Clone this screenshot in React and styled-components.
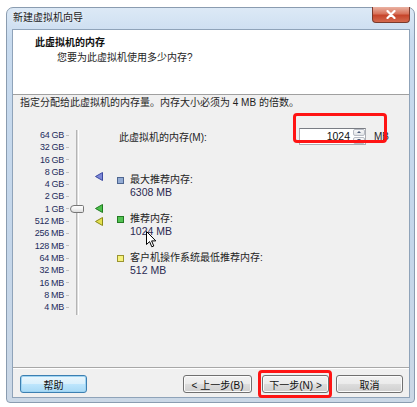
import React from 'react';
import styled, { createGlobalStyle } from 'styled-components';

const GlobalStyle = createGlobalStyle`
  html, body {
    margin: 0;
    padding: 0;
    background: #ffffff;
  }
  body {
    font-family: "Liberation Sans", "Noto Sans CJK SC", sans-serif;
    font-size: 10px;
    color: #1a1a1a;
  }
`;

const Page = styled.div`
  padding: 7px 0 0 6px;
`;

const Window = styled.div`
  position: relative;
  box-sizing: border-box;
  width: 409px;
  height: 396px;
  border: 1px solid #8a9cb0;
  border-radius: 7px 7px 4px 4px;
  background: linear-gradient(180deg, #dce9f6 0%, #c8dbef 8%, #c4d6ea 60%, #cbd8e6 100%);
  display: flex;
  flex-direction: column;
`;

const TitleBar = styled.div`
  height: 21px;
  display: flex;
  align-items: flex-start;
  padding-left: 6px;
`;

const TitleText = styled.div`
  line-height: 19px;
  font-size: 10px;
  color: #1a1a1a;
  text-shadow: 0 0 4px #ffffff;
  flex: 1;
`;

const CloseButton = styled.div`
  width: 38px;
  height: 16px;
  margin: -1px 4px 0 0;
  box-sizing: border-box;
  border: 1px solid #7a3a2c;
  border-top: none;
  border-radius: 0 0 4px 4px;
  background: linear-gradient(180deg, #eab2a2 0%, #d8735b 45%, #c6452b 55%, #d46a4e 100%);
  display: flex;
  align-items: center;
  justify-content: center;
`;

const Client = styled.div`
  flex: 1;
  margin: 0 4px 4px 5px;
  border: 1px solid #8fa3b9;
  background: #f0f0f0;
  display: flex;
  flex-direction: column;
`;

const Header = styled.div`
  height: 58px;
  background: #ffffff;
  border-bottom: 1px solid #a0a0a0;
  padding: 6px 0 0 22px;
  box-sizing: content-box;
`;

const HeaderTitle = styled.div`
  font-weight: bold;
  line-height: 14px;
  color: #111;
`;

const HeaderSub = styled.div`
  line-height: 14px;
  margin: 1px 0 0 22px;
  color: #1e1e1e;
`;

const Body = styled.div`
  flex: 1;
  padding: 1px 0 0 7px;
`;

const Instruction = styled.div`
  line-height: 14px;
  color: #1e1e1e;
`;

const MainRow = styled.div`
  display: flex;
  margin-top: 17px;
`;

const ScaleLabels = styled.div`
  width: 44px;
  padding-top: 2px;
  display: flex;
  flex-direction: column;
  align-items: flex-end;
`;

const ScaleLabel = styled.div`
  height: 12.3px;
  line-height: 12.3px;
  font-size: 9px;
  letter-spacing: -0.3px;
  color: #232c5c;
  white-space: nowrap;
`;

const Ticks = styled.div`
  width: 5px;
  padding-top: 2px;
  display: flex;
  flex-direction: column;
  align-items: flex-end;
`;

const Tick = styled.div`
  height: 12.3px;
  width: 3px;
  display: flex;
  align-items: center;
  &::after {
    content: '';
    width: 3px;
    height: 1px;
    background: #c0c0c0;
  }
`;

const TrackColumn = styled.div`
  position: relative;
  width: 17px;
  padding-top: 3px;
  display: flex;
  justify-content: center;
`;

const Track = styled.div`
  width: 1px;
  height: 185px;
  margin-right: 1px;
  border-left: 1px solid #b4b4b4;
  border-right: 1px solid #ffffff;
  background: #dcdcdc;
`;

const Thumb = styled.div`
  position: absolute;
  left: 1px;
  width: 14px;
  height: 8px;
  box-sizing: border-box;
  border: 1px solid #767676;
  border-radius: 5px 2px 2px 5px;
  background: linear-gradient(180deg, #ffffff 0%, #f2f2f2 50%, #dcdcdc 100%);
`;

const ArrowColumn = styled.div`
  position: relative;
  width: 31px;
`;

const Marker = styled.svg`
  position: absolute;
  left: 9px;
`;

const RightColumn = styled.div`
  display: flex;
  flex-direction: column;
`;

const FieldRow = styled.div`
  height: 18px;
  display: flex;
  align-items: center;
`;

const FieldLabel = styled.div`
  width: 180px;
  padding-left: 2px;
  color: #1e1e1e;
`;

const SpinBox = styled.div`
  display: flex;
  height: 17px;
  box-sizing: border-box;
  border: 1px solid #abadb3;
  border-top-color: #7a7d84;
  background: #ffffff;
`;

const SpinValue = styled.div`
  width: 50px;
  padding-right: 3px;
  text-align: right;
  line-height: 15px;
  font-size: 10.5px;
  color: #111;
`;

const SpinButtons = styled.div`
  width: 12px;
  height: 15px;
  display: flex;
  flex-direction: column;
  justify-content: space-between;
`;

const SpinHalf = styled.div`
  height: 7px;
  box-sizing: border-box;
  display: flex;
  align-items: center;
  justify-content: center;
  border: 1px solid #b8bcc4;
  border-radius: 2px;
  background: linear-gradient(180deg, #f8f8f8, #e0e2e6);
  &::after {
    content: '';
    border-left: 2px solid transparent;
    border-right: 2px solid transparent;
    ${p => (p.$down ? 'border-top: 2px solid #4a5a78;' : 'border-bottom: 2px solid #4a5a78;')}
  }
`;

const Unit = styled.div`
  margin-left: 8px;
  color: #1e1e1e;
`;

const Legend = styled.div`
  display: flex;
  flex-direction: column;
  gap: 15px;
  margin-top: 29px;
`;

const LegendItem = styled.div`
  display: flex;
  align-items: flex-start;
`;

const Swatch = styled.div`
  width: 7px;
  height: 7px;
  box-sizing: border-box;
  margin: 3px 6px 0 0;
  border: 1px solid ${p => p.$border};
  background: ${p => p.$fill};
`;

const LegendText = styled.div`
  line-height: 12px;
`;

const LegendTitle = styled.div`
  color: #1e1e1e;
`;

const LegendValue = styled.div`
  color: #2a2a50;
  font-size: 10.5px;
`;

const Footer = styled.div`
  height: 18px;
  border-top: 1px solid #a8a8a8;
  box-shadow: inset 0 1px 0 #ffffff;
  padding: 7px 5px 4px 7px;
  display: flex;
`;

const Button = styled.div`
  width: ${p => p.$w}px;
  margin-left: ${p => p.$ml || 0}px;
  height: 18px;
  box-sizing: border-box;
  border: 1px solid ${p => (p.$focus ? '#3c7fb1' : '#707070')};
  border-radius: 3px;
  background: ${p =>
    p.$focus
      ? 'linear-gradient(180deg, #eaf6fd 0%, #d9f0fc 49%, #bee6fd 50%, #a7d9f5 100%)'
      : 'linear-gradient(180deg, #f2f2f2 0%, #ebebeb 49%, #dddddd 50%, #cfcfcf 100%)'};
  box-shadow: inset 0 0 0 1px ${p => (p.$focus ? '#9fd4f2' : '#fbfbfb')};
  display: flex;
  align-items: center;
  justify-content: center;
  color: #111;
  font-size: 10px;
`;

const Highlight = styled.div`
  position: absolute;
  box-sizing: border-box;
  border: 3px solid #ff1414;
  border-radius: 4px;
`;

const Cursor = styled.svg`
  position: absolute;
  left: 139px;
  top: 223px;
`;

const scale = ['64 GB', '32 GB', '16 GB', '8 GB', '4 GB', '2 GB', '1 GB', '512 MB', '256 MB', '128 MB', '64 MB', '32 MB', '16 MB', '8 MB', '4 MB'];
const ROW = 12.3;
const centerOf = mb => 2 + ROW / 2 + ROW * Math.log2(65536 / mb);

const markers = [
  { mb: 6308, fill: '#7d88d8', stroke: '#3c4aa0' },
  { mb: 1024, fill: '#4cc04c', stroke: '#1f7a1f' },
  { mb: 512, fill: '#e4e050', stroke: '#8a8a18' },
];

const legend = [
  { title: '最大推荐内存:', value: '6308 MB', fill: '#94acd4', border: '#4e6690' },
  { title: '推荐内存:', value: '1024 MB', fill: '#52c252', border: '#237a23' },
  { title: '客户机操作系统最低推荐内存:', value: '512 MB', fill: '#f6f27c', border: '#9a9430' },
];

export default function App() {
  return (
    <Page>
      <GlobalStyle />
      <Window>
        <TitleBar>
          <TitleText>新建虚拟机向导</TitleText>
          <CloseButton>
            <svg width="10" height="9" viewBox="0 0 10 9">
              <path d="M1.5 1 L8.5 8 M8.5 1 L1.5 8" stroke="#ffffff" strokeWidth="2.2" strokeLinecap="round" />
            </svg>
          </CloseButton>
        </TitleBar>
        <Client>
          <Header>
            <HeaderTitle>此虚拟机的内存</HeaderTitle>
            <HeaderSub>您要为此虚拟机使用多少内存?</HeaderSub>
          </Header>
          <Body>
            <Instruction>指定分配给此虚拟机的内存量。内存大小必须为 4 MB 的倍数。</Instruction>
            <MainRow>
              <ScaleLabels>
                {scale.map(s => <ScaleLabel key={s}>{s}</ScaleLabel>)}
              </ScaleLabels>
              <Ticks>
                {scale.map(s => <Tick key={s} />)}
              </Ticks>
              <TrackColumn>
                <Track />
                <Thumb style={{ top: centerOf(1024) - 4 }} />
              </TrackColumn>
              <ArrowColumn>
                {markers.map(m => (
                  <Marker key={m.mb} width="8" height="9" viewBox="0 0 8 9" style={{ top: centerOf(m.mb) - 4.5 }}>
                    <polygon points="7.5,0.5 0.5,4.5 7.5,8.5" fill={m.fill} stroke={m.stroke} strokeWidth="1" />
                  </Marker>
                ))}
              </ArrowColumn>
              <RightColumn>
                <FieldRow>
                  <FieldLabel>此虚拟机的内存(M):</FieldLabel>
                  <SpinBox>
                    <SpinValue>1024</SpinValue>
                    <SpinButtons>
                      <SpinHalf />
                      <SpinHalf $down />
                    </SpinButtons>
                  </SpinBox>
                  <Unit>MB</Unit>
                </FieldRow>
                <Legend>
                  {legend.map(l => (
                    <LegendItem key={l.title}>
                      <Swatch $fill={l.fill} $border={l.border} />
                      <LegendText>
                        <LegendTitle>{l.title}</LegendTitle>
                        <LegendValue>{l.value}</LegendValue>
                      </LegendText>
                    </LegendItem>
                  ))}
                </Legend>
              </RightColumn>
            </MainRow>
          </Body>
          <Footer>
            <Button $w={67} $focus>帮助</Button>
            <Button $w={69} $ml={96}>&lt; 上一步(B)</Button>
            <Button $w={67} $ml={10}>下一步(N) &gt;</Button>
            <Button $w={67} $ml={7}>取消</Button>
          </Footer>
        </Client>
        <Highlight style={{ left: 286, top: 105, width: 94, height: 30 }} />
        <Highlight style={{ left: 251, top: 362, width: 74, height: 28 }} />
        <Cursor width="11" height="17" viewBox="0 0 11 17">
          <path d="M0.5 0.5 L0.5 13.5 L3.6 10.6 L5.8 15.8 L7.8 15 L5.6 9.9 L9.8 9.9 Z" fill="#ffffff" stroke="#000000" strokeWidth="1" strokeLinejoin="round" />
        </Cursor>
      </Window>
    </Page>
  );
}
